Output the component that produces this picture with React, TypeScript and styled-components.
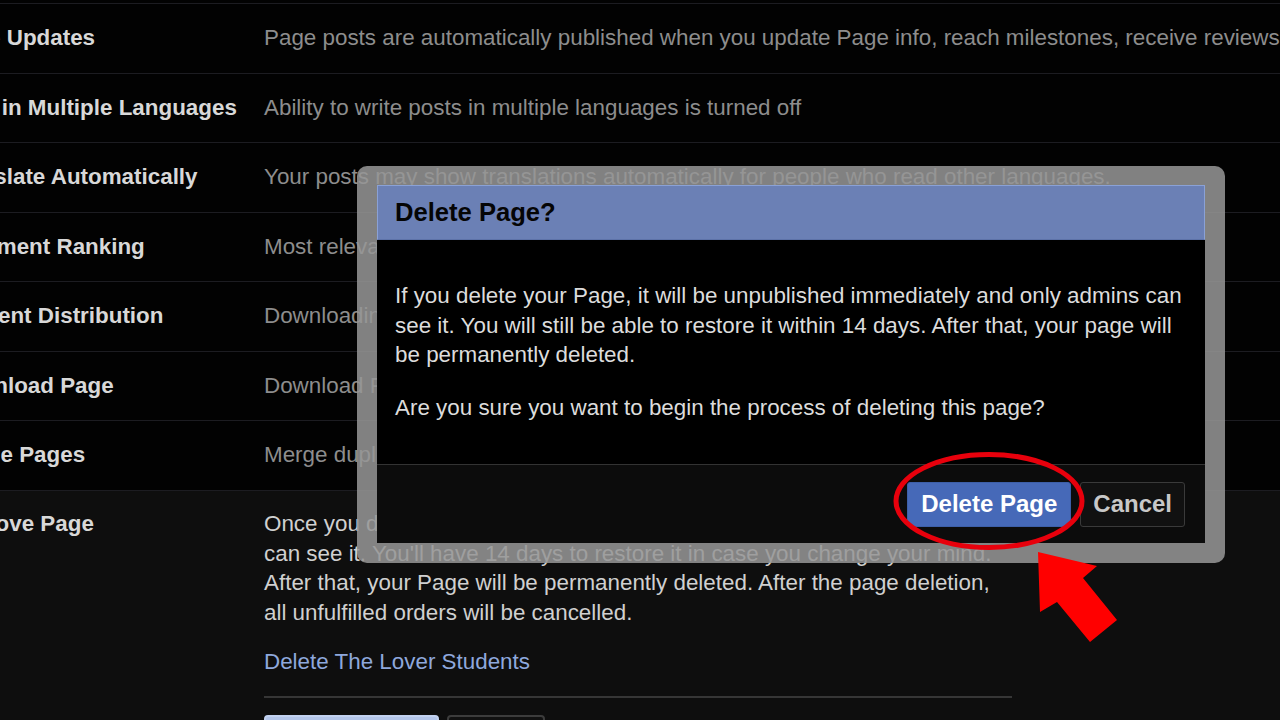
import React from "react";
import styled, { createGlobalStyle } from "styled-components";

const Global = createGlobalStyle`
  html, body {
    margin: 0;
    padding: 0;
    background: #020202;
    width: 1280px;
    height: 720px;
    overflow: hidden;
  }
  body {
    font-family: "Liberation Sans", Arial, sans-serif;
  }
  #root {
    position: relative;
    width: 1280px;
    height: 720px;
    overflow: hidden;
  }
`;

const Page = styled.div`
  margin-left: -53px;
  width: 1333px;
  padding-top: 3px;
`;

const Row = styled.div<{ $expanded?: boolean }>`
  display: grid;
  grid-template-columns: 317px 1fr;
  align-items: ${(p) => (p.$expanded ? "start" : "center")};
  height: ${(p) => (p.$expanded ? "240px" : "69.5px")};
  box-sizing: border-box;
  border-top: 1px solid #1c1c21;
  background: ${(p) => (p.$expanded ? "#0e0e0e" : "transparent")};
  padding-top: ${(p) => (p.$expanded ? "18.5px" : "0")};
`;

const Label = styled.div`
  font-size: 22.4px;
  line-height: 29.6px;
  font-weight: 700;
  color: #d8d8d8;
  white-space: nowrap;
`;

const Desc = styled.div`
  font-size: 22.4px;
  line-height: 29.6px;
  color: #8d8d8d;
  white-space: nowrap;
`;

const RemoveBlock = styled.div`
  width: 748px;
  display: flex;
  flex-direction: column;
`;

const RemoveText = styled.div`
  font-size: 22.4px;
  line-height: 29.6px;
  color: #d0d0d0;
  white-space: nowrap;
`;

const PageLink = styled.a`
  margin-top: 19.5px;
  font-size: 22.4px;
  line-height: 29.6px;
  color: #8ea8dc;
  text-decoration: none;
`;

const Divider = styled.div`
  margin-top: 20px;
  height: 2px;
  background: #363636;
`;

const BottomActions = styled.div`
  display: flex;
  gap: 8px;
  margin-top: 17px;
`;

const GhostButton = styled.div<{ $primary?: boolean }>`
  width: ${(p) => (p.$primary ? "175px" : "98px")};
  height: 40px;
  box-sizing: border-box;
  border-radius: 4px;
  background: ${(p) => (p.$primary ? "#b3c6ea" : "#111111")};
  border: 2px solid ${(p) => (p.$primary ? "#c2d2f0" : "#3c3c3c")};
`;

const Frame = styled.div`
  position: absolute;
  left: 357px;
  top: 166px;
  width: 868px;
  height: 397px;
  box-sizing: border-box;
  padding: 19px 20px 20px;
  border-radius: 10px;
  background: rgba(150, 150, 150, 0.86);
`;

const Dialog = styled.div`
  display: flex;
  flex-direction: column;
  height: 100%;
  background: #000;
`;

const Header = styled.div`
  height: 55px;
  box-sizing: border-box;
  display: flex;
  align-items: center;
  padding-left: 17px;
  background: #6b80b5;
  border: 1px solid #8aa1d6;
  border-bottom-color: #5d72a8;
`;

const Title = styled.h2`
  margin: 0;
  font-size: 25.6px;
  font-weight: 700;
  color: #050505;
`;

const Body = styled.div`
  height: 224px;
  box-sizing: border-box;
  padding: 41px 18px 0;
  font-size: 22.4px;
  line-height: 29.6px;
  color: #dcdcdc;
`;

const Para = styled.p<{ $spaced?: boolean }>`
  margin: ${(p) => (p.$spaced ? "23.5px 0 0" : "0")};
  white-space: nowrap;
`;

const Footer = styled.div`
  flex: 1;
  display: flex;
  align-items: center;
  justify-content: flex-end;
  gap: 9px;
  padding-right: 20px;
  border-top: 1px solid #333;
  background: #0c0c0c;
`;

const DialogButton = styled.button<{ $danger?: boolean }>`
  height: 45px;
  box-sizing: border-box;
  padding: 0 ${(p) => (p.$danger ? "13px" : "12px")};
  border-radius: 3px;
  font-family: "Liberation Sans", Arial, sans-serif;
  font-size: 24px;
  font-weight: 700;
  color: ${(p) => (p.$danger ? "#ffffff" : "#c8c8c8")};
  background: ${(p) => (p.$danger ? "#4669b8" : "#111111")};
  border: 1px solid ${(p) => (p.$danger ? "#3d5fa8" : "#3a3a3a")};
`;

const Annotation = styled.svg`
  position: absolute;
  left: 0;
  top: 0;
  width: 1280px;
  height: 720px;
  pointer-events: none;
`;

const rows = [
  {
    label: "Page Updates",
    desc: "Page posts are automatically published when you update Page info, reach milestones, receive reviews and more.",
  },
  {
    label: "Post in Multiple Languages",
    desc: "Ability to write posts in multiple languages is turned off",
  },
  {
    label: "Translate Automatically",
    desc: "Your posts may show translations automatically for people who read other languages.",
  },
  {
    label: "Comment Ranking",
    desc: "Most relevant comments are shown by default.",
  },
  {
    label: "Content Distribution",
    desc: "Downloading to Facebook is allowed.",
  },
  {
    label: "Download Page",
    desc: "Download Page",
  },
  {
    label: "Merge Pages",
    desc: "Merge duplicate Pages",
  },
];

export default function App() {
  return (
    <>
      <Global />
      <Page>
        {rows.map((r) => (
          <Row key={r.label}>
            <Label>{r.label}</Label>
            <Desc>{r.desc}</Desc>
          </Row>
        ))}
        <Row $expanded>
          <Label>Remove Page</Label>
          <RemoveBlock>
            <RemoveText>Once you delete your Page, it will be unpublished and only admins</RemoveText>
            <RemoveText>can see it. You'll have 14 days to restore it in case you change your mind.</RemoveText>
            <RemoveText>After that, your Page will be permanently deleted. After the page deletion,</RemoveText>
            <RemoveText>all unfulfilled orders will be cancelled.</RemoveText>
            <PageLink href="#">Delete The Lover Students</PageLink>
            <Divider />
            <BottomActions>
              <GhostButton $primary />
              <GhostButton />
            </BottomActions>
          </RemoveBlock>
        </Row>
      </Page>

      <Frame>
        <Dialog>
          <Header>
            <Title>Delete Page?</Title>
          </Header>
          <Body>
            <Para>
              If you delete your Page, it will be unpublished immediately and only admins can
              <br />
              see it. You will still be able to restore it within 14 days. After that, your page will
              <br />
              be permanently deleted.
            </Para>
            <Para $spaced>Are you sure you want to begin the process of deleting this page?</Para>
          </Body>
          <Footer>
            <DialogButton $danger>Delete Page</DialogButton>
            <DialogButton>Cancel</DialogButton>
          </Footer>
        </Dialog>
      </Frame>

      <Annotation viewBox="0 0 1280 720">
        <ellipse cx="989" cy="501" rx="93" ry="46.5" fill="none" stroke="#e8000c" strokeWidth="5" />
        <polygon
          points="1038,552 1097,566 1083,578 1117,620 1090,642 1057,602 1040,612"
          fill="#ff0000"
        />
      </Annotation>
    </>
  );
}
